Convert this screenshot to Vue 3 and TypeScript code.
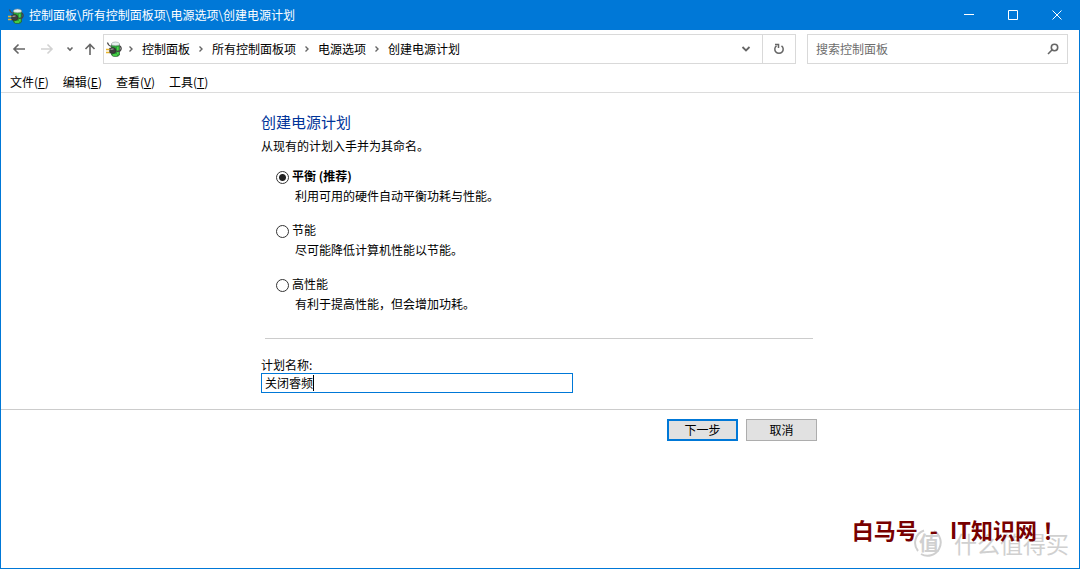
<script setup lang="ts">
import { ref } from 'vue'

interface Plan {
  id: string
  name: string
  description: string
}

const crumbs: string[] = ['控制面板', '所有控制面板项', '电源选项', '创建电源计划']

const menus = [
  { label: '文件', key: 'F' },
  { label: '编辑', key: 'E' },
  { label: '查看', key: 'V' },
  { label: '工具', key: 'T' },
]

const plans: Plan[] = [
  { id: 'balanced', name: '平衡 (推荐)', description: '利用可用的硬件自动平衡功耗与性能。' },
  { id: 'saver', name: '节能', description: '尽可能降低计算机性能以节能。' },
  { id: 'performance', name: '高性能', description: '有利于提高性能，但会增加功耗。' },
]

const selected = ref('balanced')
const planName = ref('关闭睿频')
const query = ref('')
</script>

<template>
  <div class="window">
    <svg class="defs" width="0" height="0" aria-hidden="true">
      <symbol id="power-icon" viewBox="0 0 16 16">
        <path d="M1.500 1.500Q2 4.500 5.500 5.500" stroke="#4a4a4a" stroke-width="1.300" />
        <path class="green" d="M5.500 3.500h8v10.500Q12.500 15.500 9.500 15.500T5.500 14Z" />
        <path class="cup" d="M5.500 4V2.500Q6.500 1 9.500 1T13.500 2.500V4Q9.500 5.500 5.500 4Z" />
        <path d="M11.800 6v7.500M7 14h4" stroke="#4fdc4a" stroke-width="1.400" />
        <path d="M14 5Q16.300 7.500 14 10L10.500 10.500" stroke="#444" stroke-width="1.300" />
        <path class="plug" d="M3.500 7.200 7 6.500Q10 7 10 9.500T7.500 12.500L3.500 12Z" />
        <path d="M4.500 8.300 7.500 8" stroke="#b5b5b5" stroke-width="1" />
        <path d="M0 8.500h3.500M0 11.500h3.500" stroke="#e8b52c" stroke-width="1.500" />
      </symbol>
    </svg>

    <header class="titlebar">
      <svg class="app-icon" width="16" height="16"><use href="#power-icon" /></svg>
      <span class="title">{{ crumbs.join('\\') }}</span>
      <button type="button" class="caption" aria-label="最小化">
        <svg width="12" height="12" viewBox="0 0 12 12"><path d="M1 5.500h10" /></svg>
      </button>
      <button type="button" class="caption" aria-label="最大化">
        <svg width="12" height="12" viewBox="0 0 12 12"><path d="M1.500 1.500h9v9h-9z" /></svg>
      </button>
      <button type="button" class="caption" aria-label="关闭">
        <svg width="12" height="12" viewBox="0 0 12 12"><path d="M1.500 1.500l9 9M10.500 1.500l-9 9" /></svg>
      </button>
    </header>

    <div class="navbar">
      <nav class="history" aria-label="导航">
        <button type="button" class="tool" aria-label="后退">
          <svg width="14" height="12" viewBox="0 0 14 12"><path d="M13 6H2M6.500 1.500 2 6l4.500 4.500" /></svg>
        </button>
        <button type="button" class="tool faded" aria-label="前进" disabled>
          <svg width="14" height="12" viewBox="0 0 14 12"><path d="M1 6h11M7.500 1.500 12 6l-4.500 4.500" /></svg>
        </button>
        <button type="button" class="tool" aria-label="最近位置">
          <svg width="8" height="12" viewBox="0 0 8 12"><path d="M1.500 4.500 4 7l2.500-2.500" /></svg>
        </button>
        <button type="button" class="tool" aria-label="向上">
          <svg width="12" height="12" viewBox="0 0 12 12"><path d="M6 12V1.500M1.500 6 6 1.500 10.500 6" /></svg>
        </button>
      </nav>

      <div class="address">
        <svg class="crumb-icon" width="16" height="16"><use href="#power-icon" /></svg>
        <template v-for="crumb in crumbs" :key="crumb">
          <svg class="separator" width="6" height="10" viewBox="0 0 6 10"><path d="M1.500 2.500 4 5 1.500 7.500" /></svg>
          <a href="#" class="crumb">{{ crumb }}</a>
        </template>
        <button type="button" class="drop" aria-label="以前的位置">
          <svg width="10" height="10" viewBox="0 0 10 10"><path d="M1.500 3 5 6.500 8.500 3" /></svg>
        </button>
        <button type="button" class="refresh" aria-label="刷新">
          <svg width="12" height="12" viewBox="0 0 12 12"><path d="M8.500 2.800A4.200 4.200 0 1 1 3.500 2.800M2 1.500h3.500V5" /></svg>
        </button>
      </div>

      <label class="search">
        <input v-model="query" type="text" placeholder="搜索控制面板" aria-label="搜索控制面板" />
        <svg width="12" height="12" viewBox="0 0 12 12"><circle cx="7.500" cy="4.500" r="3.200" /><path d="M5.200 6.800 1 11" /></svg>
      </label>
    </div>

    <div class="menubar">
      <button v-for="menu in menus" :key="menu.key" type="button" class="menu">{{ menu.label }}(<u>{{ menu.key }}</u>)</button>
    </div>

    <form class="page" @submit.prevent>
      <main class="content">
        <h1>创建电源计划</h1>
        <p class="intro">从现有的计划入手并为其命名。</p>

        <div class="plans" role="radiogroup" aria-label="电源计划">
          <label v-for="plan in plans" :key="plan.id" class="plan">
            <input v-model="selected" type="radio" name="plan" :value="plan.id" />
            <span class="plan-name" :class="{ preferred: plan.id === 'balanced' }">{{ plan.name }}</span>
            <span class="plan-description">{{ plan.description }}</span>
          </label>
        </div>

        <hr />

        <label class="name-label" for="plan-name">计划名称:</label>
        <div class="name-field">
          <input id="plan-name" v-model="planName" type="text" />
          <span class="caret" aria-hidden="true"></span>
        </div>
      </main>

      <footer class="actions">
        <div class="actions-inner">
          <button type="submit" class="action primary">下一步</button>
          <button type="button" class="action">取消</button>
        </div>
      </footer>
    </form>

    <div class="brand">
      <svg width="30" height="30" viewBox="0 0 30 30"><path d="M10 2.500A13 13 0 0 0 4 23M7 26A13 13 0 1 0 20 3" /></svg>
      <span class="brand-mark">值</span>
      <span class="brand-name">什么值得买</span>
    </div>
    <div class="credit">
      <span>白马号</span>
      <span>-</span>
      <span>IT知识网<span class="mark">！</span></span>
    </div>
  </div>
</template>

<style>
body {
  margin: 0;
}
</style>

<style scoped>
.window,
.window button,
.window input {
  font-family: "Noto Sans CJK SC", "Noto Sans", sans-serif;
  font-size: 12px;
  line-height: 16px;
  color: #000;
}

.window {
  position: relative;
  box-sizing: border-box;
  min-height: 100vh;
  border: 1px solid #0078d7;
  background: #fff;
  overflow: hidden;
}

.window * {
  box-sizing: border-box;
}

.defs {
  position: absolute;
}

button {
  padding: 0;
  border: 0;
  background: none;
}

path,
circle {
  fill: none;
}

.green {
  fill: #2aa337;
  stroke: #2c5c30;
  stroke-width: 0.7;
}

.cup {
  fill: #e6f0ee;
  stroke: #8b9997;
  stroke-width: 0.6;
}

.plug {
  fill: #3d3d3d;
  stroke: #222;
  stroke-width: 0.5;
}

.titlebar {
  display: flex;
  align-items: center;
  height: 29px;
  padding-left: 7px;
  background: #0078d7;
}

.app-icon {
  flex: none;
}

.title {
  flex: 1;
  padding-left: 5px;
  line-height: 18px;
  padding-bottom: 2px;
  color: #fff;
  white-space: nowrap;
}

.caption {
  display: flex;
  align-items: center;
  justify-content: center;
  width: 44px;
  height: 26px;
  padding-bottom: 2px;
}

.caption path {
  stroke: #fff;
}

.navbar {
  display: flex;
  align-items: center;
  padding: 4px 11px 0 11px;
}

.history {
  display: flex;
  align-items: center;
  width: 91px;
  gap: 12px;
}

.tool {
  display: flex;
}

.tool:nth-child(2) {
  margin-left: 2px;
}

.tool:nth-child(4) {
  margin-left: -2px;
}

.tool path {
  stroke: #666;
  stroke-width: 1.6;
}

.faded path {
  stroke: #d2d2d2;
}

.address {
  display: flex;
  flex: 1;
  align-items: center;
  height: 30px;
  border: 1px solid #d9d9d9;
}

.crumb-icon {
  flex: none;
  margin: 0 6px 0 2px;
}

.separator {
  flex: none;
}

.separator path {
  stroke: #666;
  stroke-width: 1.4;
}

.crumb {
  padding: 0 8px;
  color: #000;
  text-decoration: none;
  white-space: nowrap;
}

.drop {
  display: flex;
  align-items: center;
  justify-content: center;
  width: 32px;
  height: 28px;
  margin-left: auto;
}

.drop path {
  stroke: #666;
  stroke-width: 1.8;
}

.refresh {
  display: flex;
  align-items: center;
  justify-content: center;
  width: 33px;
  height: 28px;
  border-left: 1px solid #d9d9d9;
}

.refresh path {
  stroke: #666;
  stroke-width: 1.5;
}

.search {
  display: flex;
  align-items: center;
  width: 261px;
  height: 30px;
  margin-left: 11px;
  padding: 0 8px;
  border: 1px solid #d9d9d9;
}

.search input {
  flex: 1;
  min-width: 0;
  padding: 0;
  border: 0;
  outline: 0;
}

.search input::placeholder {
  color: #6d6d6d;
  opacity: 1;
}

.search path,
.search circle {
  stroke: #666;
  stroke-width: 1.6;
}

.menubar {
  display: flex;
  gap: 14px;
  height: 29px;
  padding: 0 9px;
  border-bottom: 1px solid #dcdcdc;
}

.menu {
  height: 36px;
}

.content,
.actions-inner {
  width: 100%;
  max-width: 558px;
  margin: 0 auto;
}

.content {
  padding: 18px 0 16px;
}

h1 {
  margin: 0;
  color: #003399;
  font-size: 15px;
  font-weight: 400;
  line-height: 22px;
}

.intro {
  margin: 5px 0 13px;
}

.plans {
  display: grid;
  gap: 17px;
  padding-left: 15px;
}

.plan {
  display: grid;
  grid-template-columns: 13px 1fr;
  column-gap: 3px;
  row-gap: 3px;
  line-height: 17px;
}

.plan input {
  appearance: none;
  width: 13px;
  height: 13px;
  margin: 4px 0 0;
  border: 1px solid #333;
  border-radius: 50%;
  background: #fff;
}

.plan input:checked {
  background: radial-gradient(circle, #222 3px, #fff 4px);
}

.plan-name.preferred {
  font-weight: 700;
}

.plan-description {
  grid-column: 2;
  padding-left: 3px;
}

hr {
  margin: 26px 6px 18px 4px;
  border: 0;
  border-top: 1px solid #ccc;
}

.name-label {
  display: block;
}

.name-field {
  position: relative;
  max-width: 312px;
}

.name-field input {
  display: block;
  width: 100%;
  height: 20px;
  padding: 0 3px 2px;
  border: 1px solid #0078d7;
  outline: 0;
}

.caret {
  position: absolute;
  top: 2px;
  left: 52px;
  width: 1px;
  height: 16px;
  background: #000;
}

.actions {
  border-top: 1px solid #ccc;
}

.actions-inner {
  display: flex;
  justify-content: flex-end;
  gap: 8px;
  padding: 9px 2px 0 0;
}

.action {
  width: 71px;
  height: 22px;
  border: 1px solid #adadad;
  background: #e1e1e1;
}

.action.primary {
  border: 2px solid #0078d7;
}

.credit {
  position: absolute;
  right: 20px;
  bottom: 25px;
  display: flex;
  gap: 12px;
  color: #780000;
  font-size: 22px;
  font-weight: 700;
  line-height: 28px;
  white-space: nowrap;
}

.mark {
  font-family: "Noto Sans CJK TC", sans-serif;
}

.brand {
  position: absolute;
  right: 10px;
  bottom: 10px;
  display: flex;
  align-items: center;
  height: 30px;
  color: #d0d0d0;
  white-space: nowrap;
}

.brand path {
  stroke: #cfcfcf;
  stroke-width: 2;
}

.brand-mark {
  width: 30px;
  margin-left: -30px;
  font-size: 20px;
  font-weight: 700;
  text-align: center;
}

.brand-name {
  margin-left: 10px;
  font-size: 23px;
}
</style>
